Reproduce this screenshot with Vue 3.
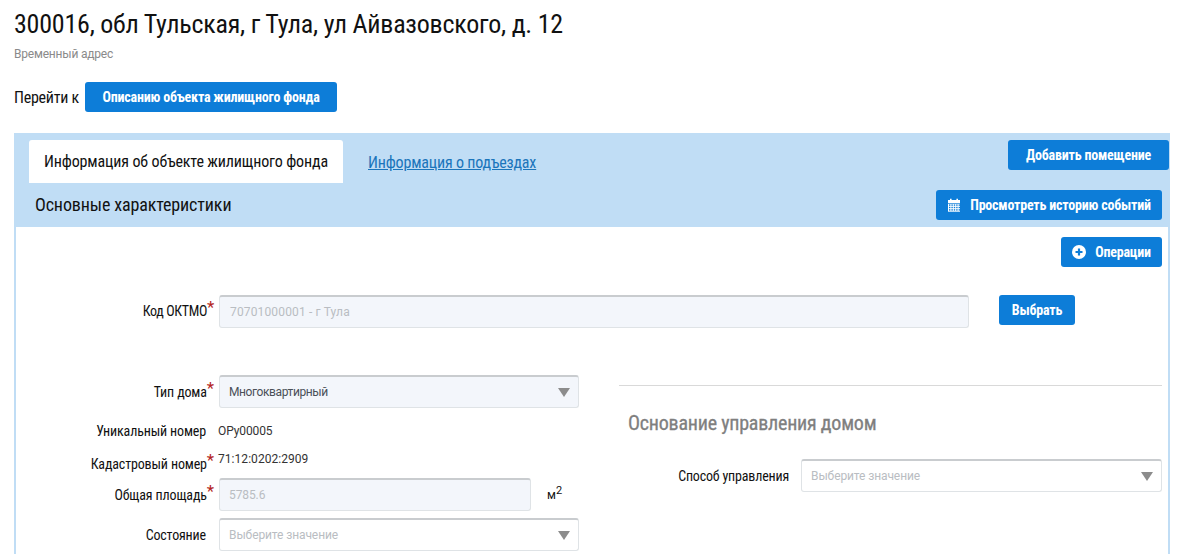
<script setup>
const calendarCells = [0, 1, 2, 3, 4].flatMap((c) => [0, 1, 2].map((r) => ({ x: 2 + c * 2.4, y: 6.4 + r * 2.4 })))
</script>

<template>
  <div class="page">
    <h1 class="title">300016, обл Тульская, г Тула, ул Айвазовского, д. 12</h1>
    <div class="subtitle">Временный адрес</div>
    <div class="goto">
      <span class="goto-label">Перейти к</span>
      <button class="btn btn-goto">Описанию объекта жилищного фонда</button>
    </div>

    <section class="panel">
      <div class="tabs">
        <div class="tab-active">Информация об объекте жилищного фонда</div>
        <a class="tab-link">Информация о подъездах</a>
        <button class="btn btn-add">Добавить помещение</button>
      </div>
      <div class="section-head">
        <h2 class="section-title">Основные характеристики</h2>
        <button class="btn btn-history">
          <svg class="cal" viewBox="0 0 14 14" width="14" height="14">
            <path fill="#fff" d="M1 2h2V.8h1.6V2h4.8V.8H11V2h2v3H1z" />
            <rect x="1" y="5.7" width="12" height="8" fill="#fff" />
            <rect v-for="(c, i) in calendarCells" :key="i" :x="c.x" :y="c.y" width="1.4" height="1.4" fill="#0d7dd8" />
          </svg>
          Просмотреть историю событий
        </button>
      </div>

      <div class="body">
        <div class="ops">
          <button class="btn btn-ops">
            <svg viewBox="0 0 14 14" width="14" height="14">
              <circle cx="7" cy="7" r="7" fill="#fff" />
              <path d="M7 3.5v7M3.5 7h7" stroke="#0d7dd8" stroke-width="2.2" />
            </svg>
            Операции
          </button>
        </div>

        <div class="row-oktmo">
          <label class="label">Код ОКТМО<span class="star">*</span></label>
          <div class="input input-oktmo disabled">70701000001 - г Тула</div>
          <button class="btn btn-choose">Выбрать</button>
        </div>

        <div class="cols">
          <div class="col-left">
            <div class="row row-type">
              <label class="label">Тип дома<span class="star">*</span></label>
              <div class="input select filled">Многоквартирный<i class="arrow"></i></div>
            </div>
            <div class="row row-unique">
              <label class="label">Уникальный номер</label>
              <span class="value">ОРу00005</span>
            </div>
            <div class="row row-cadastre">
              <label class="label">Кадастровый номер<span class="star">*</span></label>
              <span class="value value-cad">71:12:0202:2909</span>
            </div>
            <div class="row row-area">
              <label class="label">Общая площадь<span class="star">*</span></label>
              <div class="input input-area disabled">5785.6</div>
              <span class="unit">м<sup>2</sup></span>
            </div>
            <div class="row row-state">
              <label class="label">Состояние</label>
              <div class="input select placeholder">Выберите значение<i class="arrow"></i></div>
            </div>
          </div>

          <div class="col-right">
            <hr class="rule" />
            <h3 class="basis-title">Основание управления домом</h3>
            <div class="row row-method">
              <label class="method-label">Способ управления</label>
              <div class="input select method placeholder">Выберите значение<i class="arrow"></i></div>
            </div>
          </div>
        </div>
      </div>
    </section>
  </div>
</template>

<style>
html, body { margin: 0; overflow: hidden; background: #fff; }
</style>

<style scoped>
.page {
  height: 554px;
  overflow: hidden;
  box-sizing: border-box;
  padding: 0 23px 0 14px;
  font-family: "Roboto Condensed", "Liberation Sans Narrow", Roboto, sans-serif;
  color: #111;
}
.title { margin: 0; padding-top: 9px; font-size: 26px; line-height: 30px; font-weight: 400; letter-spacing: -0.23px; }
.subtitle { margin-top: 7px; font-family: Roboto, sans-serif; font-size: 12px; line-height: 16px; color: #8a8a8a; letter-spacing: -0.2px; }
.goto { display: flex; align-items: center; gap: 6px; margin-top: 20px; }
.goto-label { flex: none; width: 65px; font-size: 16px; letter-spacing: -0.25px; white-space: nowrap; }
.btn {
  border: 0;
  border-radius: 3px;
  background: #0d7dd8;
  color: #fff;
  font-family: inherit;
  font-size: 14px;
  font-weight: 700;
  letter-spacing: -0.2px;
  height: 30px;
  padding: 0;
  display: inline-flex;
  align-items: center;
  justify-content: center;
}
.btn-goto { width: 252px; }
.panel { margin-top: 21px; background: #c0ddf5; padding: 0 2px; height: 421px; box-sizing: border-box; }
.tabs { display: flex; align-items: flex-start; padding: 7px 0 0 13px; height: 50px; box-sizing: border-box; }
.tab-active {
  background: #fff;
  width: 314px;
  height: 43px;
  border-radius: 3px 3px 0 0;
  display: flex;
  align-items: center;
  justify-content: center;
  font-size: 16px;
  letter-spacing: -0.14px;
}
.tab-link { margin: 13px 0 0 25px; font-size: 16px; letter-spacing: -0.18px; color: #1b75bb; text-decoration: underline; }
.btn-add { width: 161px; margin-left: auto; margin-right: -1px; }
.section-head { display: flex; align-items: center; justify-content: space-between; height: 44px; padding: 0 6px 0 19px; }
.section-title { margin: 0 0 1px; font-size: 18px; font-weight: 400; letter-spacing: -0.13px; }
.btn-history { width: 226px; gap: 9px; }
.body { background: #fff; height: 327px; padding: 10px 6px 0 0; box-sizing: border-box; font-size: 14px; }
.ops { display: flex; justify-content: flex-end; }
.btn-ops { width: 101px; gap: 9px; }
.row-oktmo { display: flex; align-items: flex-start; margin-top: 28px; }
.label {
  flex: none;
  width: 203px;
  box-sizing: border-box;
  padding-right: 13px;
  text-align: right;
  font-size: 14px;
  line-height: 16px;
  letter-spacing: -0.15px;
  white-space: nowrap;
}
.row-oktmo .label { margin-top: 8px; letter-spacing: -0.35px; }
.star { color: #b3261e; font-size: 17px; line-height: 10px; margin-right: -8px; position: relative; top: -3px; font-family: Roboto, sans-serif; }
.input {
  box-sizing: border-box;
  height: 33px;
  border: 1px solid #dfe3e6;
  border-top: 2px solid #c9cccf;
  border-radius: 3px;
  padding: 0 9px;
  display: flex;
  align-items: center;
  font-family: Roboto, sans-serif;
  font-size: 12px;
  letter-spacing: -0.1px;
}
.disabled { background: #f3f6fb; color: #b9bdc2; }
.filled { background: #f3f6fb; color: #4a5058; letter-spacing: -0.4px; }
.placeholder { background: #fff; color: #b9bdc2; }
.input-oktmo { width: 750px; letter-spacing: 0.15px; padding-left: 10px; }
.btn-choose { width: 76px; margin-left: 30px; }
.cols { display: flex; margin-top: 47px; }
.col-left { width: 563px; flex: none; }
.col-right { flex: 1; margin-left: 40px; }
.row { display: flex; align-items: center; }
.select { position: relative; width: 360px; }
.arrow {
  position: absolute;
  right: 8px;
  top: 11px;
  border-left: 6px solid transparent;
  border-right: 6px solid transparent;
  border-top: 9px solid #8c8c8c;
}
.row-unique { margin-top: 15px; height: 16px; }
.value { font-family: Roboto, sans-serif; font-size: 12px; color: #333; letter-spacing: -0.1px; margin-left: -1px; }
.row-cadastre { margin-top: 14px; height: 22px; align-items: flex-end; padding-bottom: 3px; box-sizing: border-box; }
.value-cad { align-self: flex-start; margin: -1px 0 0 -1px; letter-spacing: 0.05px; }
.row-area { margin-top: 3px; }
.input-area { width: 312px; }
.unit { margin-left: 16px; font-family: Roboto, sans-serif; font-size: 12px; }
.unit sup { font-size: 11px; line-height: 0; }
.row-state { margin-top: 7px; }
.rule { margin: 10px 0 0; border: 0; border-top: 1px solid #d9d9d9; }
.basis-title { margin: 25px 0 0 9px; font-size: 20px; line-height: 24px; font-weight: 400; letter-spacing: -0.23px; -webkit-text-stroke: 0.3px #7f7f7f; color: #7f7f7f; }
.row-method { margin-top: 24px; }
.method-label { flex: none; width: 170px; text-align: right; font-size: 14px; letter-spacing: -0.18px; }
.method { width: 361px; margin-left: 12px; }
</style>
